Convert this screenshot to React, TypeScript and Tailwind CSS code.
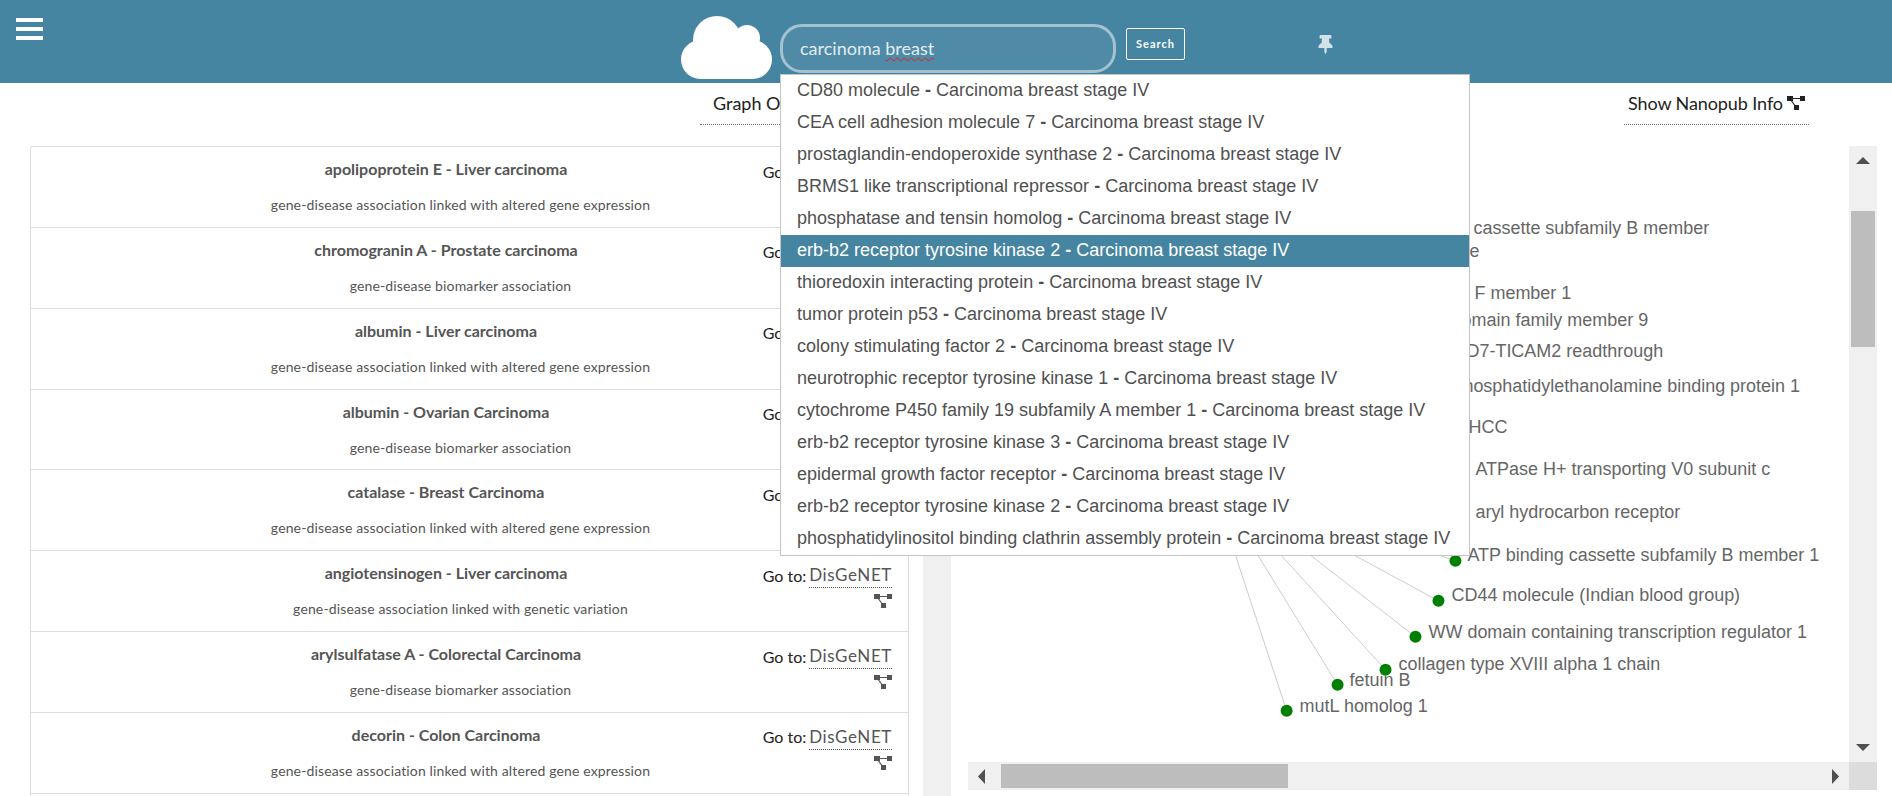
import React from "react";
import { FaThumbtack } from "react-icons/fa";

const rows = [
  ["apolipoprotein E - Liver carcinoma", "gene-disease association linked with altered gene expression"],
  ["chromogranin A - Prostate carcinoma", "gene-disease biomarker association"],
  ["albumin - Liver carcinoma", "gene-disease association linked with altered gene expression"],
  ["albumin - Ovarian Carcinoma", "gene-disease biomarker association"],
  ["catalase - Breast Carcinoma", "gene-disease association linked with altered gene expression"],
  ["angiotensinogen - Liver carcinoma", "gene-disease association linked with genetic variation"],
  ["arylsulfatase A - Colorectal Carcinoma", "gene-disease biomarker association"],
  ["decorin - Colon Carcinoma", "gene-disease association linked with altered gene expression"],
];

const suggestions = [
  "CD80 molecule",
  "CEA cell adhesion molecule 7",
  "prostaglandin-endoperoxide synthase 2",
  "BRMS1 like transcriptional repressor",
  "phosphatase and tensin homolog",
  "erb-b2 receptor tyrosine kinase 2",
  "thioredoxin interacting protein",
  "tumor protein p53",
  "colony stimulating factor 2",
  "neurotrophic receptor tyrosine kinase 1",
  "cytochrome P450 family 19 subfamily A member 1",
  "erb-b2 receptor tyrosine kinase 3",
  "epidermal growth factor receptor",
  "erb-b2 receptor tyrosine kinase 2",
  "phosphatidylinositol binding clathrin assembly protein",
];

const HUB = { x: 1209, y: 477 };
const nodes = [
  { x: 1455, y: 561 },
  { x: 1438, y: 601 },
  { x: 1415, y: 637 },
  { x: 1385, y: 670 },
  { x: 1337, y: 685 },
  { x: 1286, y: 711 },
];
const labels: { t: string; x: number; y: number; end?: boolean }[] = [
  { t: "ATP binding cassette subfamily B member", x: 1709, y: 228, end: true },
  { t: "e", x: 1479, y: 251, end: true },
  { t: "ATP binding cassette subfamily F member 1", x: 1571, y: 293, end: true },
  { t: "WW domain family member 9", x: 1648, y: 320, end: true },
  { t: "TMED7-TICAM2 readthrough", x: 1663, y: 351, end: true },
  { t: "phosphatidylethanolamine binding protein 1", x: 1800, y: 386, end: true },
  { t: "HCC", x: 1468, y: 427 },
  { t: "ATPase H+ transporting V0 subunit c", x: 1475, y: 469 },
  { t: "aryl hydrocarbon receptor", x: 1475, y: 512 },
  { t: "ATP binding cassette subfamily B member 1", x: 1467, y: 555.5 },
  { t: "CD44 molecule (Indian blood group)", x: 1451, y: 595.5 },
  { t: "WW domain containing transcription regulator 1", x: 1428, y: 632 },
  { t: "collagen type XVIII alpha 1 chain", x: 1398, y: 664.5 },
  { t: "fetuin B", x: 1349, y: 680.5 },
  { t: "mutL homolog 1", x: 1299, y: 706 },
];

function NetIcon({ className }: { className: string }) {
  return (
    <svg viewBox="0 0 18 14" width="18" height="14" className={className} fill="currentColor">
      <rect x="0" y="0" width="6" height="5" />
      <rect x="13" y="0" width="5" height="5" />
      <rect x="7" y="9" width="5" height="5" />
      <path d="M5 2.5H14M3.5 3.5L9 11" stroke="currentColor" strokeWidth="1.2" fill="none" />
    </svg>
  );
}

export default function App() {
  return (
    <div className="relative h-[796px] w-[1892px] overflow-hidden bg-white font-['Lato',sans-serif]">
      <header className="flex h-[83px] items-start bg-[#4685a2]">
        <div className="ml-4 mt-[18px] flex w-[27px] flex-col gap-[5px]">
          <span className="h-1 bg-white" />
          <span className="h-1 bg-white" />
          <span className="h-1 bg-white" />
        </div>
        <svg viewBox="0 0 91 63" width="91" height="63" className="ml-[638px] mt-4 shrink-0" fill="#fff">
          <circle cx="36" cy="24" r="24" />
          <circle cx="66" cy="22" r="13" />
          <rect x="0" y="24" width="91" height="39" rx="19.5" />
        </svg>
        <div className="ml-2 mt-6 flex h-[49px] w-[336px] shrink-0 items-center rounded-[22px] border-[3px] border-[#a3c2d0] bg-[#4f8aa6] pl-[17px] text-[18px] text-[#e2ecf1]">
          <span>
            carcinoma{" "}
            <span className="underline decoration-[#e02020] decoration-wavy decoration-1 underline-offset-2">breast</span>
          </span>
        </div>
        <button className="ml-[10px] mt-7 flex h-8 w-[59px] shrink-0 items-center justify-center rounded-[2px] border border-white text-[11px] font-bold tracking-[1px] text-white">
          Search
        </button>
        <FaThumbtack className="ml-[131px] mt-[35px] shrink-0 text-[#d3e2e9]" size={19} />
      </header>

      <div className="flex h-[63px] items-start">
        <div className="ml-[700px] flex h-[42px] w-[180px] items-center border-b border-dotted border-[#777] pb-[1px] pl-[13px] text-[18px] text-[#222]">
          Graph Options
        </div>
        <div className="ml-auto mr-[83px] flex h-[42px] w-[185px] items-center whitespace-nowrap border-b border-dotted border-[#777] pb-[1px] pl-[4px] text-[18px] tracking-[-0.1px] text-[#222]">
          Show Nanopub Info
          <NetIcon className="ml-[4px] shrink-0 text-[#222]" />
        </div>
      </div>

      <main className="flex items-start pl-[30px]">
        <div className="w-[879px] shrink-0 rounded-t-[3px] border border-[#ddd] border-b-0">
          {rows.map(([title, sub], i) => (
            <div key={i} className="flex h-[80.85px] border-b border-[#ddd]">
              <div className="flex-1 text-center text-[#555]">
                <div className="mt-3 pl-[98px] text-[16px] leading-5 font-bold">{title}</div>
                <div className="mt-4 pl-[127px] text-[14px] leading-5 tracking-[0.14px]">{sub}</div>
              </div>
              <div className="mr-4 mt-3 flex w-[129px] flex-col items-end">
                <div className="flex h-[25px] items-center whitespace-nowrap">
                  <span className="mr-[3px] text-[16px] text-[#222]">Go to:</span>
                  <span className="border-b border-dotted border-[#555] text-[17px] leading-6 tracking-[0.6px] text-[#555]">DisGeNET</span>
                </div>
                <NetIcon className="mt-[6px] text-[#555]" />
              </div>
            </div>
          ))}
          <div className="h-[80px] border-b border-[#ddd]" />
        </div>

        <div className="ml-[14px] h-[650px] w-[28px] shrink-0 bg-[#f0f0f0]" />

        <div className="ml-[17px] flex w-[909px] shrink-0 flex-col">
          <div className="flex h-[616px]">
            <svg viewBox="967 146 882 616" width="881" height="616" className="shrink-0 font-['Liberation_Sans',sans-serif]">
              {nodes.map((n, i) => (
                <line key={i} x1={HUB.x} y1={HUB.y} x2={n.x} y2={n.y} stroke="#ccc" strokeWidth="1" />
              ))}
              {nodes.map((n, i) => (
                <circle key={i} cx={n.x} cy={n.y} r="6" fill="#008000" />
              ))}
              {labels.map((l, i) => (
                <text
                  key={i}
                  x={l.x}
                  y={l.y + 6}
                  fontSize="18"
                  fill="#666"
                  textAnchor={l.end ? "end" : "start"}
                >
                  {l.t}
                </text>
              ))}
            </svg>
            <div className="flex w-[28px] shrink-0 flex-col items-center bg-[#f0f0f0]">
              <svg viewBox="0 0 14 7" width="14" height="7" className="mt-[11px] shrink-0" fill="#505050">
                <path d="M7 0L14 7H0Z" />
              </svg>
              <div className="mt-[47px] h-[136px] w-6 shrink-0 bg-[#bdbdbd]" />
              <svg viewBox="0 0 14 7" width="14" height="7" className="mt-[397px] shrink-0" fill="#505050">
                <path d="M0 0H14L7 7Z" />
              </svg>
            </div>
          </div>
          <div className="flex h-[28px]">
            <div className="flex w-[881px] shrink-0 items-center bg-[#f0f0f0]">
              <svg viewBox="0 0 7 15" width="7" height="15" className="ml-[10px] shrink-0" fill="#505050">
                <path d="M7 0V15L0 7.5Z" />
              </svg>
              <div className="ml-[16px] h-6 w-[287px] shrink-0 bg-[#bdbdbd]" />
              <svg viewBox="0 0 7 15" width="7" height="15" className="ml-[544px] shrink-0" fill="#505050">
                <path d="M0 0V15L7 7.5Z" />
              </svg>
            </div>
            <div className="w-[28px] bg-[#dcdcdc]" />
          </div>
        </div>
      </main>

      <ul className="absolute left-[780px] top-[74px] w-[690px] border border-[#c5c5c5] bg-white font-['Liberation_Sans',sans-serif] text-[18px] text-[#505050]">
        {suggestions.map((s, i) => (
          <li
            key={i}
            className={
              "h-8 whitespace-nowrap pl-4 leading-[30px] " + (i === 5 ? "bg-[#4685a2] text-white" : "")
            }
          >
            {s} <b className="font-bold">-</b> Carcinoma breast stage IV
          </li>
        ))}
      </ul>
    </div>
  );
}
